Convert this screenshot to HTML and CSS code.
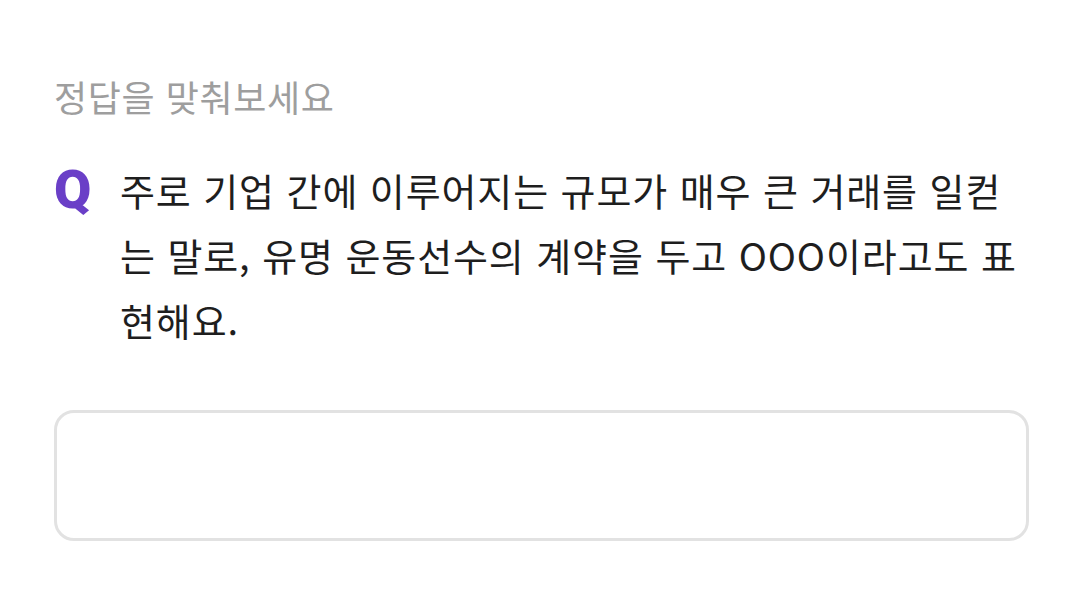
FILE: index.html
```html
<!DOCTYPE html>
<html lang="ko">
<head>
  <meta charset="UTF-8" />
  <meta name="viewport" content="width=device-width, initial-scale=1.0"/>
  <title>퀴즈</title>
  <link rel="stylesheet" href="styles.css">
</head>
<body>

<div class="quiz">
  <p class="quiz-title">정답을 맞춰보세요</p>
  <div class="question">
    <span class="q-mark">Q</span>
    <p class="q-text">주로 기업 간에 이루어지는 규모가 매우 큰 거래를 일컫는 말로, 유명 운동선수의 계약을 두고 OOO이라고도 표현해요.</p>
  </div>
  <input type="text" class="answer" aria-label="정답 입력" />
</div>

</body>
</html>
```

FILE: styles.css
```css
:root {
  --color-texto: #1e1e1e;
  --color-gris: #9e9e9e;
  --color-morado: #6a3fc7;
  --color-borde: #e2e2e2;
}

body {
  font-family: "Noto Sans CJK KR", "Noto Sans", sans-serif;
  background-color: #ffffff;
  margin: 0;
  padding: 0;
}

.quiz {
  padding: 72px 51px 0 54px;
}

.quiz-title {
  margin: 0;
  font-size: 36px;
  line-height: 48px;
  letter-spacing: 0.6px;
  color: var(--color-gris);
}

.question {
  display: flex;
  align-items: flex-start;
  margin-top: 37px;
}

.q-mark {
  flex: 0 0 66px;
  font-family: Roboto, "Liberation Sans", sans-serif;
  font-weight: 900;
  font-size: 54px;
  line-height: 65px;
  color: var(--color-morado);
}

.q-text {
  flex: 1;
  margin: 0;
  font-size: 38px;
  line-height: 65px;
  letter-spacing: 0.9px;
  color: var(--color-texto);
  word-break: break-all;
}

.answer {
  display: block;
  box-sizing: border-box;
  width: 100%;
  height: 131px;
  margin-top: 58px;
  border: 3px solid var(--color-borde);
  border-radius: 20px;
  background: #ffffff;
  font-size: 32px;
  padding: 0 24px;
  outline: none;
}
```
